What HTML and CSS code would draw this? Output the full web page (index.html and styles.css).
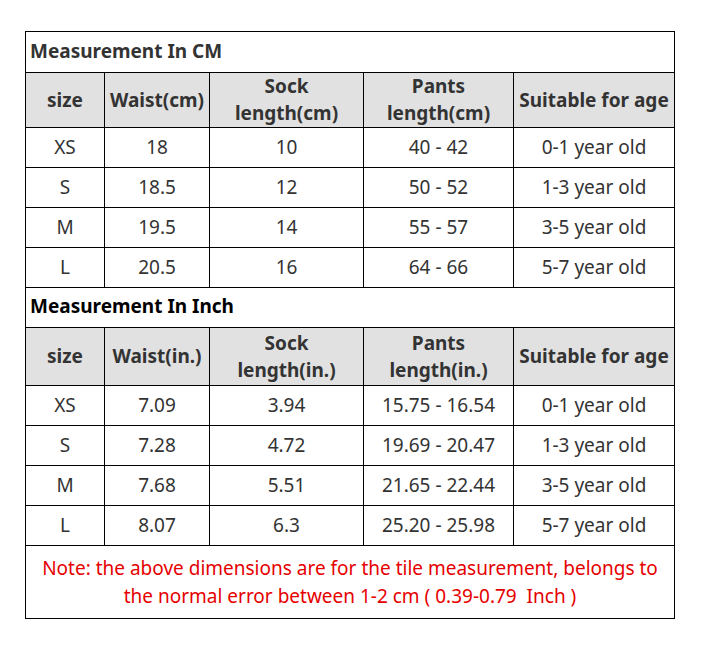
FILE: index.html
```html
<!DOCTYPE html>
<html>
<head>
<meta charset="utf-8">
<link rel="stylesheet" href="styles.css">
</head>
<body>
<table class="chart">
  <colgroup>
    <col class="c1"><col class="c2"><col class="c3"><col class="c4"><col class="c5">
  </colgroup>
  <tr class="title t1"><td colspan="5">Measurement In CM</td></tr>
  <tr class="head h1">
    <th>size</th><th>Waist(cm)</th><th>Sock<br>length(cm)</th><th>Pants<br>length(cm)</th><th>Suitable for age</th>
  </tr>
  <tr class="data"><td>XS</td><td>18</td><td>10</td><td>40 - 42</td><td>0-1 year old</td></tr>
  <tr class="data"><td>S</td><td>18.5</td><td>12</td><td>50 - 52</td><td>1-3 year old</td></tr>
  <tr class="data"><td>M</td><td>19.5</td><td>14</td><td>55 - 57</td><td>3-5 year old</td></tr>
  <tr class="data"><td>L</td><td>20.5</td><td>16</td><td>64 - 66</td><td>5-7 year old</td></tr>
  <tr class="title t2"><td colspan="5">Measurement In Inch</td></tr>
  <tr class="head h2">
    <th>size</th><th>Waist(in.)</th><th>Sock<br>length(in.)</th><th>Pants<br>length(in.)</th><th>Suitable for age</th>
  </tr>
  <tr class="data"><td>XS</td><td>7.09</td><td>3.94</td><td>15.75 - 16.54</td><td>0-1 year old</td></tr>
  <tr class="data"><td>S</td><td>7.28</td><td>4.72</td><td>19.69 - 20.47</td><td>1-3 year old</td></tr>
  <tr class="data"><td>M</td><td>7.68</td><td>5.51</td><td>21.65 - 22.44</td><td>3-5 year old</td></tr>
  <tr class="data"><td>L</td><td>8.07</td><td>6.3</td><td>25.20 - 25.98</td><td>5-7 year old</td></tr>
  <tr class="note"><td colspan="5">Note: the above dimensions are for the tile measurement, belongs to<br>the normal error between 1-2 cm ( 0.39-0.79&nbsp; Inch )</td></tr>
</table>
</body>
</html>
```
FILE: styles.css
```css
html, body {
  margin: 0;
  padding: 0;
  background: #fff;
}
body {
  font-family: "Noto Sans", "Open Sans", sans-serif;
  color: #333;
}
.chart {
  margin: 31px 0 0 25px;
  border-collapse: collapse;
  table-layout: fixed;
  width: 649px;
}
.c1 { width: 79px; }
.c2 { width: 105px; }
.c3 { width: 154px; }
.c4 { width: 150px; }
.c5 { width: 161px; }
.chart td, .chart th {
  border: 1.3px solid #000;
  padding: 0;
  text-align: center;
  vertical-align: middle;
  font-size: 19px;
  line-height: 27px;
}
.chart th {
  background: #e1e1e1;
  font-weight: bold;
  color: #333;
}
.title td {
  text-align: left;
  font-weight: bold;
  padding-left: 4px;
  padding-bottom: 2px;
}
.t1 { height: 41px; }
.t1 td { color: #333; }
.t2 { height: 40px; }
.t2 td { color: #000; }
.h1 { height: 55px; }
.h2 { height: 58px; }
.data { height: 40px; }
.data td { color: #333; }
.note { height: 73px; }
.note td {
  color: #e60000;
  line-height: 28px;
}
```
